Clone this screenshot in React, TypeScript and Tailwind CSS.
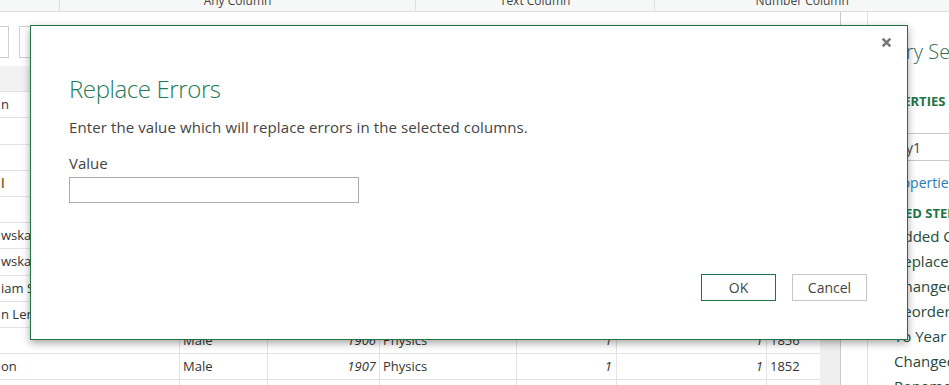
import React from "react";

const font = { fontFamily: '"Segoe UI", "Open Sans", "Noto Sans", sans-serif' };

type Row = {
  h: string;
  name: string;
  nameCls?: string;
  gender: string;
  year: string;
  category: string;
  a: string;
  b: string;
  born: string;
};

const rows: Row[] = [
  { h: "h-[26px]", name: "n", gender: "Male", year: "1901", category: "Physics", a: "1", b: "1", born: "1845" },
  { h: "h-[27px]", name: "", gender: "Male", year: "1902", category: "Physics", a: "1", b: "2", born: "1853" },
  { h: "h-[26px]", name: "", gender: "Male", year: "1902", category: "Physics", a: "1", b: "2", born: "1865" },
  { h: "h-[26px]", name: "l", nameCls: "font-semibold text-[#7a5a14]", gender: "Male", year: "1903", category: "Physics", a: "1", b: "2", born: "1852" },
  { h: "h-[26px]", name: "", gender: "Male", year: "1903", category: "Physics", a: "1", b: "4", born: "1859" },
  { h: "h-[26px]", name: "wska-Curie", gender: "Female", year: "1903", category: "Physics", a: "1", b: "4", born: "1867" },
  { h: "h-[27px]", name: "wska-Curie", gender: "Female", year: "1911", category: "Chemistry", a: "1", b: "1", born: "1867" },
  { h: "h-[26px]", name: "iam Strutt", gender: "Male", year: "1904", category: "Physics", a: "1", b: "1", born: "1842" },
  { h: "h-[26px]", name: "n Lenard", gender: "Male", year: "1905", category: "Physics", a: "1", b: "1", born: "1862" },
  { h: "h-[26px]", name: "", gender: "Male", year: "1906", category: "Physics", a: "1", b: "1", born: "1856" },
  { h: "h-[26px]", name: "on", gender: "Male", year: "1907", category: "Physics", a: "1", b: "1", born: "1852" },
  { h: "h-[26px]", name: "", gender: "", year: "", category: "", a: "", b: "", born: "" },
];

const steps = [
  "Added Custom",
  "Replaced Errors",
  "Changed Type",
  "Reordered Columns",
  "To Year",
  "Changed Type1",
  "Renamed Columns",
];

function Grid() {
  return (
    <div className="w-[820px] flex flex-col text-[13px] text-[#333]">
      <div className="h-[26px] bg-[#f2f2f2] border-b border-[#e3e3e3]" />
      {rows.map((r, i) => (
        <div key={i} className={`${r.h} flex border-b border-[#e3e3e3] shrink-0`}>
          <div className="w-[180px] border-r border-[#e3e3e3] pl-[1px] flex items-center overflow-hidden whitespace-nowrap">
            <span className={r.nameCls}>{r.name}</span>
          </div>
          <div className="w-[88px] border-r border-[#e3e3e3] pl-[3px] flex items-center">{r.gender}</div>
          <div className="w-[112px] border-r border-[#e3e3e3] pr-[3px] flex items-center justify-end italic">{r.year}</div>
          <div className="w-[137px] border-r border-[#e3e3e3] pl-[3px] flex items-center">{r.category}</div>
          <div className="w-[100px] border-r border-[#e3e3e3] pr-[4px] flex items-center justify-end italic">{r.a}</div>
          <div className="w-[150px] border-r border-[#e3e3e3] pr-[3px] flex items-center justify-end italic">{r.b}</div>
          <div className="w-[53px] pl-[3px] flex items-center">{r.born}</div>
        </div>
      ))}
    </div>
  );
}

function SettingsPanel() {
  return (
    <div className="flex-1 border-l border-[#e1e1e1] flex flex-col overflow-hidden whitespace-nowrap">
      <div className="pt-[26px] text-[20px] leading-[28px] font-light text-[#2f6b55]">Query Settings</div>
      <div className="mt-[26px] text-[13px] leading-[18px] font-bold text-[#217346]">PROPERTIES</div>
      <div className="mt-[3px] text-[13px] leading-[18px] text-[#444]">Name</div>
      <div className="mt-[2px] h-[28px] w-[110px] border border-[#c8c8c8] pl-[4px] flex items-center text-[14px] text-[#444]">
        Query1
      </div>
      <div className="mt-[12px] text-[14px] leading-[20px] text-[#2b7bb9]">All Properties</div>
      <div className="mt-[11px] text-[13px] leading-[18px] font-bold text-[#217346]">APPLIED STEPS</div>
      <div className="mt-[2px] flex flex-col pl-[26px] text-[15px] text-[#264a3c]">
        {steps.map((s) => (
          <div key={s} className="h-[25px] leading-[25px]">
            {s}
          </div>
        ))}
      </div>
    </div>
  );
}

function Dialog() {
  return (
    <div className="absolute left-[30px] top-[25px] w-[878px] h-[315px] bg-white border border-[#217346] shadow-[0_3px_8px_rgba(0,0,0,0.35)] flex flex-col pl-[38px] pr-[40px] pt-[47px] pb-[38px]">
      <button className="absolute right-[15px] top-[11px] w-[11px] h-[11px]">
        <svg viewBox="0 0 10 10" width="11" height="11">
          <path d="M1.5 1.5 L8.5 8.5 M8.5 1.5 L1.5 8.5" stroke="#777" strokeWidth="2.4" />
        </svg>
      </button>
      <div className="text-[24px] leading-[32px] font-light tracking-[-0.4px] text-[#237a57]">Replace Errors</div>
      <div className="mt-[12px] text-[15px] leading-[20px] tracking-[0.1px] text-[#444]">
        Enter the value which will replace errors in the selected columns.
      </div>
      <div className="mt-[16px] text-[15px] leading-[20px] text-[#444]">Value</div>
      <input className="mt-[4px] w-[290px] h-[26px] border border-[#ababab] outline-none px-2 text-[14px]" />
      <div className="mt-auto flex justify-end gap-[16px]">
        <button className="w-[75px] h-[27px] border border-[#217346] text-[14px] text-[#444]">OK</button>
        <button className="w-[75px] h-[27px] border border-[#c6c6c6] text-[14px] text-[#444]">Cancel</button>
      </div>
    </div>
  );
}

export default function App() {
  return (
    <div className="relative w-[949px] h-[385px] overflow-hidden bg-white" style={font}>
      <div className="h-[12px] flex bg-[#f6f8f7] border-b border-[#dde2df] overflow-hidden text-[12px] text-[#444]">
        <div className="w-[61px] border-r border-[#dde2df]" />
        <div className="w-[361px] border-r border-[#dde2df] flex justify-center">
          <span className="-mt-[7px] leading-[16px]">Any Column</span>
        </div>
        <div className="w-[243px] border-r border-[#dde2df] flex justify-center">
          <span className="-mt-[7px] leading-[16px]">Text Column</span>
        </div>
        <div className="w-[298px] flex justify-center">
          <span className="-mt-[7px] leading-[16px]">Number Column</span>
        </div>
      </div>
      <div className="flex">
        <div className="flex flex-col">
          <div className="h-[54px] flex items-start pt-[14px] gap-[10px] -ml-[20px]">
            <div className="w-[29px] h-[32px] border border-[#cfcfcf]" />
            <div className="w-[90px] h-[32px] border border-[#cfcfcf]" />
          </div>
          <div className="flex">
            <Grid />
            <div className="w-[20px] bg-[#efefef]" />
          </div>
        </div>
        <div className="w-[27px] border-l border-[#c8c8c8]" />
        <SettingsPanel />
      </div>
      <Dialog />
    </div>
  );
}
